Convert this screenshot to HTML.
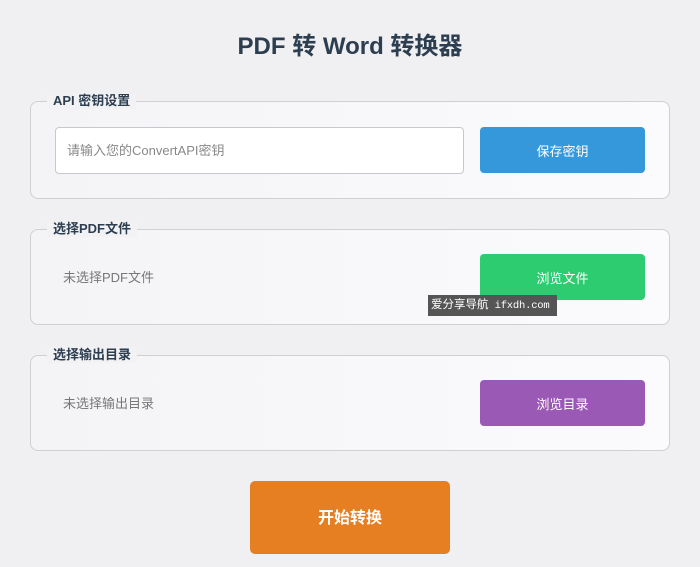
<!DOCTYPE html>
<html><head><meta charset="utf-8"><style>
body{margin:0;width:700px;height:567px;background:#f0f0f2;font-family:"Liberation Sans","Noto Sans CJK SC",sans-serif;position:relative;overflow:hidden}
h1{position:absolute;top:31px;left:0;width:700px;text-align:center;margin:0;font-size:24px;color:#2c3e50;font-weight:bold;line-height:32px}
.box{position:absolute;left:30px;width:638px;border:1px solid #cfcfd4;border-radius:8px;background:linear-gradient(90deg,#f4f3f6,#fbfbfd)}
.lg{position:absolute;top:-9px;left:16px;padding:0 6px;background:#f2f2f4;font-size:13px;font-weight:bold;color:#2c3e50;line-height:16px}
.btn{position:absolute;left:449px;width:165px;height:46px;border-radius:4px;color:#fff;font-size:13px;text-align:center;line-height:50px}
.txt{position:absolute;left:32px;font-size:13px;color:#777;line-height:16px}
</style></head><body>
<h1>PDF 转 Word 转换器</h1>
<div class="box" style="top:101px;height:96px"><div class="lg">API 密钥设置</div>
<div style="position:absolute;left:24px;top:25px;width:407px;height:45px;border:1px solid #c8c8cc;border-radius:4px;background:#fff"><span style="position:absolute;left:11px;top:15px;font-size:13px;color:#888;line-height:16px">请输入您的ConvertAPI密钥</span></div>
<div class="btn" style="top:25px;background:#3498db">保存密钥</div></div>
<div class="box" style="top:229px;height:94px"><div class="lg">选择PDF文件</div>
<div class="txt" style="top:40px">未选择PDF文件</div>
<div class="btn" style="top:24px;background:#2ecc71">浏览文件</div></div>
<div class="box" style="top:355px;height:94px"><div class="lg">选择输出目录</div>
<div class="txt" style="top:40px">未选择输出目录</div>
<div class="btn" style="top:24px;background:#9b59b6">浏览目录</div></div>
<div style="position:absolute;left:428px;top:295px;width:129px;height:21px;background:#555;color:#fff;font-size:12px;line-height:21px;padding-left:3px;box-sizing:border-box;white-space:nowrap;overflow:hidden;font-family:'Liberation Mono','Noto Sans CJK SC',monospace"><span style="font-size:11.5px">爱分享导航</span><span style="font-size:10.5px;letter-spacing:-0.2px"> ifxdh.com</span></div>
<div style="position:absolute;left:250px;top:481px;width:200px;height:73px;border-radius:5px;background:#e67e22;color:#fff;font-size:16px;font-weight:bold;text-align:center;line-height:76px">开始转换</div>
</body></html>
